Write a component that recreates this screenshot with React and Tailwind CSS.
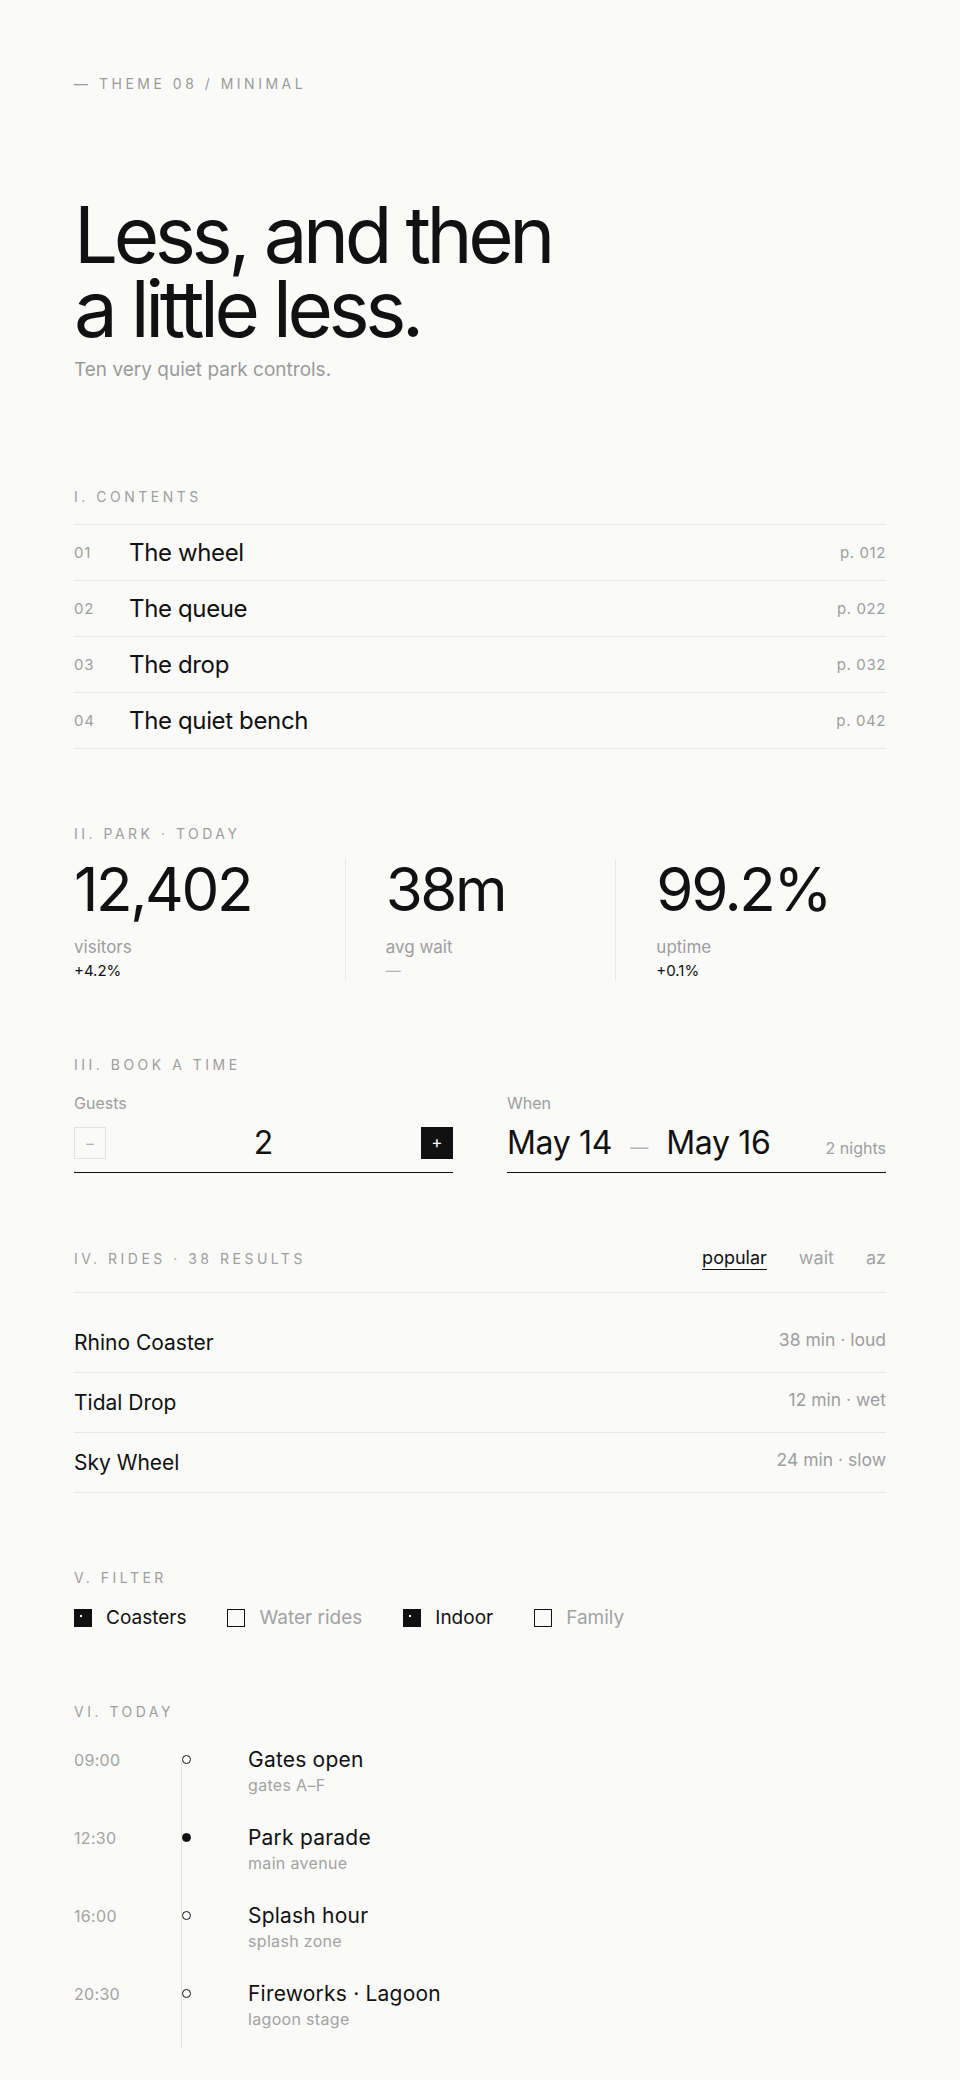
const contents = [
  { n: "01", title: "The wheel", page: "p. 012" },
  { n: "02", title: "The queue", page: "p. 022" },
  { n: "03", title: "The drop", page: "p. 032" },
  { n: "04", title: "The quiet bench", page: "p. 042" },
];

const stats = [
  { value: "12,402", label: "visitors", delta: "+4.2%" },
  { value: "38m", label: "avg wait", delta: "—", muted: true },
  { value: "99.2%", label: "uptime", delta: "+0.1%" },
];

const rides = [
  { name: "Rhino Coaster", meta: "38 min · loud" },
  { name: "Tidal Drop", meta: "12 min · wet" },
  { name: "Sky Wheel", meta: "24 min · slow" },
];

const filters = [
  { label: "Coasters", on: true },
  { label: "Water rides", on: false },
  { label: "Indoor", on: true },
  { label: "Family", on: false },
];

const schedule = [
  { time: "09:00", title: "Gates open", place: "gates A–F" },
  { time: "12:30", title: "Park parade", place: "main avenue", now: true },
  { time: "16:00", title: "Splash hour", place: "splash zone" },
  { time: "20:30", title: "Fireworks · Lagoon", place: "lagoon stage" },
];

function Label({ children, className = "" }) {
  return (
    <div className={`text-[14px] leading-4 uppercase tracking-[0.25em] text-[#9e9e9e] ${className}`}>
      {children}
    </div>
  );
}

export default function App() {
  return (
    <div className="min-h-screen bg-[#fafaf9] text-[#111] font-['Inter','Liberation_Sans',sans-serif] antialiased">
      <div className="px-[74px] pt-[75px] pb-[20px]">
        {/* header */}
        <div className="text-[14px] leading-[18px] tracking-[0.25em] text-[#9a9a9a]">— THEME 08 / MINIMAL</div>

        <h1 className="mt-[105px] text-[78px] leading-[74px] tracking-[-0.057em] font-normal">
          Less, and then
          <br />
          a little less.
        </h1>
        <p className="mt-[10px] text-[19px] leading-[28px] text-[#9a9a9a]">Ten very quiet park controls.</p>

        {/* I. contents */}
        <Label className="mt-[105px]">I. Contents</Label>
        <ul className="mt-[19px] border-t border-[#e7e7e5]">
          {contents.map((c) => (
            <li key={c.n} className="h-[56px] flex items-center border-b border-[#e7e7e5]">
              <span className="w-[55px] pt-px text-[15px] text-[#9e9e9e] tracking-[0.06em]">{c.n}</span>
              <span className="pt-px text-[24px] tracking-[-0.015em]">{c.title}</span>
              <span className="ml-auto pt-px text-[15px] text-[#9e9e9e] tracking-[0.04em]">{c.page}</span>
            </li>
          ))}
        </ul>

        {/* II. park today */}
        <Label className="mt-[77px]">II. Park · Today</Label>
        <div className="mt-[17px] grid grid-cols-3">
          {stats.map((s, i) => (
            <div key={s.label} className={i > 0 ? "border-l border-[#e7e7e5] pl-10" : ""}>
              <div className="text-[60px] leading-[60px] tracking-[-0.04em]">{s.value}</div>
              <div className="mt-[18px] text-[17px] leading-5 text-[#9e9e9e]">{s.label}</div>
              <div className={`mt-[5px] text-[15px] leading-[18px] ${s.muted ? "text-[#b5b5b5]" : "text-[#111]"}`}>{s.delta}</div>
            </div>
          ))}
        </div>

        {/* III. book a time */}
        <Label className="mt-[77px]">III. Book a time</Label>
        <div className="mt-[20px] grid grid-cols-2 gap-x-[54px]">
          <div>
            <div className="text-[16px] leading-5 text-[#9e9e9e]">Guests</div>
            <div className="mt-[14px] flex items-center justify-between pb-[13px] border-b-[1.5px] border-[#111]">
              <button className="w-[32px] h-[32px] border border-[#e3e3e1] flex items-center justify-center text-[16px] text-[#b0b0b0]">
                −
              </button>
              <span className="text-[32px] leading-[32px]">2</span>
              <button className="w-[32px] h-[32px] bg-[#111] flex items-center justify-center text-[17px] text-white">
                +
              </button>
            </div>
          </div>
          <div>
            <div className="text-[16px] leading-5 text-[#9e9e9e]">When</div>
            <div className="mt-[14px] h-[32px] box-content flex items-baseline pb-[13px] border-b-[1.5px] border-[#111]">
              <span className="text-[32px] leading-[32px] tracking-[-0.01em]">May 14</span>
              <span className="mx-[18px] text-[18px] text-[#b5b5b5]">—</span>
              <span className="text-[32px] leading-[32px] tracking-[-0.01em]">May 16</span>
              <span className="ml-auto text-[16px] text-[#9e9e9e]">2 nights</span>
            </div>
          </div>
        </div>

        {/* IV. rides */}
        <div className="mt-[74px] flex items-center justify-between pb-[22px] border-b border-[#e7e7e5]">
          <Label>IV. Rides · 38 results</Label>
          <div className="flex gap-8 text-[18px] leading-[22px]">
            <span className="border-b-[1.5px] border-[#111]">popular</span>
            <span className="text-[#a3a3a3]">wait</span>
            <span className="text-[#a3a3a3]">az</span>
          </div>
        </div>
        <ul className="mt-[20px]">
          {rides.map((r) => (
            <li key={r.name} className="h-[60px] flex items-center justify-between border-b border-[#e7e7e5]">
              <span className="text-[21px] leading-7">{r.name}</span>
              <span className="text-[17.5px] leading-6 text-[#9e9e9e] -mt-[5px]">{r.meta}</span>
            </li>
          ))}
        </ul>

        {/* V. filter */}
        <Label className="mt-[77px]">V. Filter</Label>
        <div className="mt-[18px] flex items-center gap-[41px]">
          {filters.map((f) => (
            <label key={f.label} className="flex items-center gap-[14px] text-[19px] leading-7">
              {f.on ? (
                <span className="relative w-[18px] h-[18px] bg-[#111]">
                  <span className="absolute left-[6px] top-[6px] w-[2px] h-[2px] bg-white" />
                </span>
              ) : (
                <span className="w-[18px] h-[18px] border-[1.5px] border-[#111]" />
              )}
              <span className={f.on ? "text-[#111]" : "text-[#a3a3a3]"}>{f.label}</span>
            </label>
          ))}
        </div>

        {/* VI. today */}
        <Label className="mt-[72px]">VI. Today</Label>
        <ol className="relative mt-[26px]">
          <div className="absolute left-[107px] top-[16px] bottom-[10px] w-px bg-[#e3e3e1]" />
          {schedule.map((e) => (
            <li key={e.time} className="flex h-[78px]">
              <span className="w-[107px] pt-[4px] text-[16px] leading-5 text-[#a3a3a3] tracking-[0.02em]">{e.time}</span>
              <span className="w-[67px] pt-[9px]">
                <span
                  className={`block ml-px w-[9px] h-[9px] rounded-full border-[1.5px] border-[#111] ${e.now ? "bg-[#111]" : "bg-[#fafaf9]"}`}
                />
              </span>
              <div>
                <div className="text-[21px] leading-7 tracking-[0.01em]">{e.title}</div>
                <div className="mt-px text-[16px] leading-5 text-[#a3a3a3] tracking-[0.02em]">{e.place}</div>
              </div>
            </li>
          ))}
        </ol>
      </div>
    </div>
  );
}
